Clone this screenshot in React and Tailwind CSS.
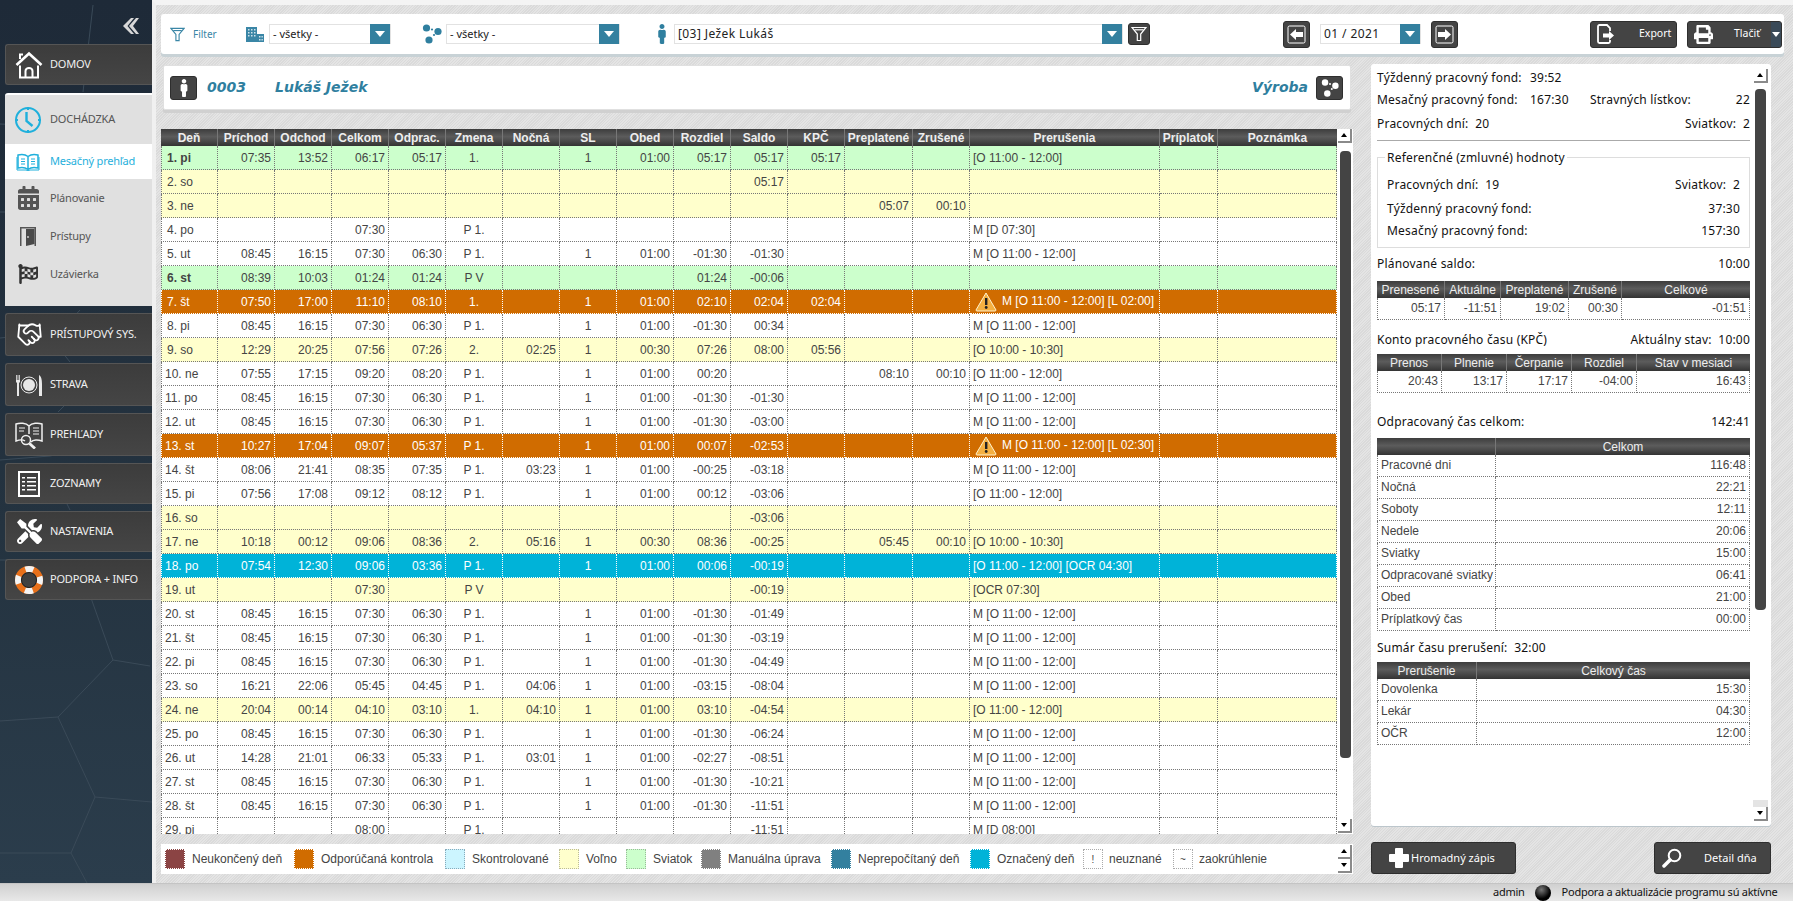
import { Handshake } from "lucide-react";
import { FaCalendarAlt, FaFlagCheckered, FaMale, FaPrint, FaTools } from "react-icons/fa";

const tahoma = "[font-family:DejaVu_Sans,sans-serif]";
const noto = "[font-family:Noto_Sans,sans-serif]";
const arial = "[font-family:Liberation_Sans,Arial,sans-serif]";
const hatch = "bg-[repeating-linear-gradient(135deg,#e4e4e4_0,#e4e4e4_1px,#dadada_1px,#dadada_2px)]";
const headBg = "bg-[linear-gradient(#3d3d3d,#5c5c5c_45%,#4a4a4a_70%,#333)]";

const O = "[O 11:00 - 12:00]";
const MO = "M [O 11:00 - 12:00]";
const std = (d, saldo) => ({ d, v: ["08:45", "16:15", "07:30", "06:30", "P 1.", "", "1", "01:00", "-01:30", saldo, "", "", ""], n: MO });

const rows = [
  { d: "1. pi", t: "g", b: true, v: ["07:35", "13:52", "06:17", "05:17", "1.", "", "1", "01:00", "05:17", "05:17", "05:17", "", ""], n: O },
  { d: "2. so", t: "y", v: ["", "", "", "", "", "", "", "", "", "05:17", "", "", ""], n: "" },
  { d: "3. ne", t: "y", v: ["", "", "", "", "", "", "", "", "", "", "", "05:07", "00:10"], n: "" },
  { d: "4. po", v: ["", "", "07:30", "", "P 1.", "", "", "", "", "", "", "", ""], n: "M [D 07:30]" },
  std("5. ut", "-01:30"),
  { d: "6. st", t: "g", b: true, v: ["08:39", "10:03", "01:24", "01:24", "P V", "", "", "", "01:24", "-00:06", "", "", ""], n: "" },
  { d: "7. št", t: "o", w: true, v: ["07:50", "17:00", "11:10", "08:10", "1.", "", "1", "01:00", "02:10", "02:04", "02:04", "", ""], n: "M [O 11:00 - 12:00] [L 02:00]" },
  std("8. pi", "00:34"),
  { d: "9. so", t: "y", v: ["12:29", "20:25", "07:56", "07:26", "2.", "02:25", "1", "00:30", "07:26", "08:00", "05:56", "", ""], n: "[O 10:00 - 10:30]" },
  { d: "10. ne", v: ["07:55", "17:15", "09:20", "08:20", "P 1.", "", "1", "01:00", "00:20", "", "", "08:10", "00:10"], n: O },
  std("11. po", "-01:30"),
  std("12. ut", "-03:00"),
  { d: "13. st", t: "o", w: true, v: ["10:27", "17:04", "09:07", "05:37", "P 1.", "", "1", "01:00", "00:07", "-02:53", "", "", ""], n: "M [O 11:00 - 12:00] [L 02:30]" },
  { d: "14. št", v: ["08:06", "21:41", "08:35", "07:35", "P 1.", "03:23", "1", "01:00", "-00:25", "-03:18", "", "", ""], n: MO },
  { d: "15. pi", v: ["07:56", "17:08", "09:12", "08:12", "P 1.", "", "1", "01:00", "00:12", "-03:06", "", "", ""], n: O },
  { d: "16. so", t: "y", v: ["", "", "", "", "", "", "", "", "", "-03:06", "", "", ""], n: "" },
  { d: "17. ne", t: "y", v: ["10:18", "00:12", "09:06", "08:36", "2.", "05:16", "1", "00:30", "08:36", "-00:25", "", "05:45", "00:10"], n: "[O 10:00 - 10:30]" },
  { d: "18. po", t: "c", v: ["07:54", "12:30", "09:06", "03:36", "P 1.", "", "1", "01:00", "00:06", "-00:19", "", "", ""], n: "[O 11:00 - 12:00] [OCR 04:30]" },
  { d: "19. ut", t: "y", v: ["", "", "07:30", "", "P V", "", "", "", "", "-00:19", "", "", ""], n: "[OCR 07:30]" },
  std("20. st", "-01:49"),
  std("21. št", "-03:19"),
  std("22. pi", "-04:49"),
  { d: "23. so", v: ["16:21", "22:06", "05:45", "04:45", "P 1.", "04:06", "1", "01:00", "-03:15", "-08:04", "", "", ""], n: MO },
  { d: "24. ne", t: "y", v: ["20:04", "00:14", "04:10", "03:10", "1.", "04:10", "1", "01:00", "03:10", "-04:54", "", "", ""], n: O },
  std("25. po", "-06:24"),
  { d: "26. ut", v: ["14:28", "21:01", "06:33", "05:33", "P 1.", "03:01", "1", "01:00", "-02:27", "-08:51", "", "", ""], n: MO },
  std("27. st", "-10:21"),
  std("28. št", "-11:51"),
  { d: "29. pi", v: ["", "", "08:00", "", "P 1.", "", "", "", "", "-11:51", "", "", ""], n: "M [D 08:00]" },
];

const rowTone = {
  g: "bg-[#ccffcc] text-[#444] [&>td]:border-[#777]",
  y: "bg-[#ffffcc] text-[#444] [&>td]:border-[#777]",
  o: "bg-[#d06c00] text-white [&>td]:border-[#fff]",
  c: "bg-[#00b3d8] text-white [&>td]:border-[#fff]",
};

const cols = [
  ["Deň", "w-[57px]"], ["Príchod", "w-[57px]"], ["Odchod", "w-[57px]"], ["Celkom", "w-[57px]"], ["Odprac.", "w-[57px]"], ["Zmena", "w-[57px]"],
  ["Nočná", "w-[57px]"], ["SL", "w-[57px]"], ["Obed", "w-[57px]"], ["Rozdiel", "w-[57px]"], ["Saldo", "w-[57px]"], ["KPČ", "w-[57px]"],
  ["Preplatené", "w-[68px]"], ["Zrušené", "w-[57px]"], ["Prerušenia", "w-[190px]"], ["Príplatok", "w-[58px]"], ["Poznámka", "w-[119px]"],
];

function Warn() {
  return (
    <svg viewBox="0 0 22 20" className="mr-[5px] ml-[2px] inline-block h-[20px] w-[22px] align-middle">
      <path d="M11 1 L21 18 Q21 19 20 19 L2 19 Q1 19 1 18 Z" fill="#f5b041" stroke="#fff3d0" strokeWidth="1" />
      <rect x="10" y="6" width="2.4" height="7" fill="#222" />
      <circle cx="11.2" cy="15.5" r="1.4" fill="#222" />
    </svg>
  );
}

function Funnel({ className, stroke = "currentColor" }) {
  return (
    <svg viewBox="0 0 16 16" fill="none" stroke={stroke} strokeWidth="1.2" className={className}>
      <path d="M1 1.5h14L9.7 8v6.5H6.3V8z" />
      <path d="M3.5 3.8h9" />
    </svg>
  );
}

function Nodes({ className, fill = "#2f7f9f" }) {
  return (
    <svg viewBox="0 0 20 20" fill={fill} className={className}>
      <circle cx="4.5" cy="4" r="3.6" />
      <circle cx="16" cy="7.5" r="3.6" />
      <circle cx="7" cy="16" r="3.6" />
      <circle cx="10" cy="5.5" r="1.1" />
      <circle cx="12" cy="11" r="1.1" />
    </svg>
  );
}

function Arrow({ right }) {
  return (
    <svg viewBox="0 0 19 19" className="h-[19px] w-[19px]">
      <rect x="1" y="1" width="17" height="17" rx="1.5" fill="none" stroke="#fff" strokeWidth="1" />
      <path d={right ? "M3 7h7V4l6 5.5-6 5.5v-3H3z" : "M16 7H9V4L3 9.5 9 15v-3h7z"} fill="#fff" />
    </svg>
  );
}

function DarkBtn({ className, children }) {
  return <div className={`flex shrink-0 items-center justify-center rounded-[3px] border border-[#2e2e2e] bg-[#444] text-white ${className}`}>{children}</div>;
}

function SelectArrow({ className = "" }) {
  return (
    <div className={`flex h-[20px] w-[20px] shrink-0 items-center justify-center bg-[#33809f] ${className}`}>
      <div className="h-0 w-0 border-x-[5px] border-t-[6px] border-x-transparent border-t-white" />
    </div>
  );
}

function Select({ className, text, big }) {
  return (
    <div className={`flex h-[20px] shrink-0 items-center border border-[#e2e2e2] bg-white ${className}`}>
      <span className={`flex-1 pl-[3px] text-[#222] ${noto} ${big ? "text-[12px] tracking-[0.4px]" : "text-[11px]"}`}>{text}</span>
      <SelectArrow />
    </div>
  );
}

function ScrollBtn({ up }) {
  return (
    <div className="flex h-[14px] w-[14px] shrink-0 items-center justify-center border-r-2 border-b-2 border-[#8a8a8a] bg-white">
      <div className={`h-0 w-0 border-x-[3.5px] border-x-transparent ${up ? "border-b-[4px] border-b-black" : "border-t-[4px] border-t-black"}`} />
    </div>
  );
}

function HomeIcon() {
  return (
    <svg viewBox="0 0 28 28" fill="none" stroke="#fff" className="h-[28px] w-[28px]">
      <path d="M1.5 14 14 2.5 26.5 14" strokeWidth="2.6" />
      <path d="M5 14.5V26.5h18V14.5" strokeWidth="2" />
      <path d="M10.5 26.5V20a3.5 3 0 0 1 7 0v6.5" strokeWidth="2" />
      <path d="M5 8V3.5h3" strokeWidth="2" />
    </svg>
  );
}

function ClockIcon() {
  return (
    <svg viewBox="0 0 28 28" fill="none" stroke="#1fb0dc" strokeWidth="2" className="h-[28px] w-[28px]">
      <circle cx="14" cy="14" r="12" />
      <path d="M12.5 6v9l6 5" strokeWidth="2.4" />
      <path d="M14 1v3M14 24v3M1 14h3M24 14h3" />
    </svg>
  );
}

function BookIcon() {
  return (
    <svg viewBox="0 0 24 18" fill="none" stroke="#1fb0dc" strokeWidth="1.5" className="h-[18px] w-[24px]">
      <path d="M12 3.5C9.5 1.5 5 1.3 2 2v13c3-.7 7.5-.5 10 1.5 2.500-2 7-2.200 10-1.500V2c-3-.7-7.500-.5-10 1.500zM12 3.500v13" />
      <path d="M1 4v13h9l2 .8 2-.8h9V4" strokeWidth="1" />
      <path d="M5 6h4M5 8.500h4M5 11h4M15 6h4M15 8.500h4M15 11h4" strokeWidth="1" />
    </svg>
  );
}

function DoorIcon() {
  return (
    <svg viewBox="0 0 18 20" className="h-[20px] w-[18px]">
      <path d="M1 20V1h16v19h-1.500V2.500H2.500V20z" fill="#555" />
      <path d="M7 3h8.500v15L7 20z" fill="#4a4a4a" />
      <circle cx="9" cy="11" r="0.9" fill="#ddd" />
    </svg>
  );
}

function PlateIcon() {
  return (
    <svg viewBox="0 0 28 22" className="h-[22px] w-[28px]" fill="#e8e8e8">
      <circle cx="14" cy="11" r="8" fill="none" stroke="#e8e8e8" strokeWidth="1" />
      <circle cx="14" cy="11" r="6" />
      <path d="M1 1h.8v5h.8V1h.8v5h.8V1H5v7L4 9v13H2V9L1 8z" />
      <path d="M24 1c2 1 3 4 3 10v11h-3z" />
    </svg>
  );
}

function BookSearchIcon() {
  return (
    <svg viewBox="0 0 30 28" fill="none" stroke="#f0f0f0" strokeWidth="1.500" className="h-[28px] w-[30px]">
      <path d="M15 5C12 2 6 1.500 2 3v17c4-1.500 7-1.500 9 0M15 5c3-3 9-3.500 13-2v17c-4-1.500-9-1.500-11 1M15 5v8" />
      <path d="M5 7h6M5 10h5M19 7h6M19 10h6M19 13h6" strokeWidth="1" />
      <circle cx="12" cy="19" r="4.500" />
      <path d="M15.500 22.500 21 27.500" strokeWidth="2.800" />
    </svg>
  );
}

function ListIcon() {
  return (
    <svg viewBox="0 0 22 26" className="h-[26px] w-[22px]">
      <rect x="1" y="1" width="20" height="24" fill="none" stroke="#fff" strokeWidth="2" />
      <path d="M4 6h3v1.500H4zM9 6h9v1.500H9zM4 10h3v1.500H4zM9 10h9v1.500H9zM4 14h3v1.500H4zM9 14h9v1.500H9zM4 18h3v1.500H4zM9 18h9v1.500H9z" fill="#fff" />
    </svg>
  );
}

function BuoyIcon() {
  return (
    <svg viewBox="0 0 30 30" className="h-[30px] w-[30px]">
      <circle cx="15" cy="15" r="11" fill="none" stroke="#e8701a" strokeWidth="6" />
      <circle cx="15" cy="15" r="11" fill="none" stroke="#f4f4f4" strokeWidth="6" strokeDasharray="8 9.300" strokeDashoffset="4" />
      <circle cx="15" cy="15" r="7.500" fill="none" stroke="#222" strokeWidth="1" />
    </svg>
  );
}

function BuildingIcon() {
  return (
    <svg viewBox="0 0 18 15" fill="#3a86a6" className="h-[15px] w-[18px]">
      <path d="M0 0h11v15H0zM11 7h7v8h-7z" />
      <path d="M2 2h1.500v1.500H2zM5 2h1.500v1.500H5zM8 2h1.500v1.500H8zM2 5h1.500v1.500H2zM5 5h1.500v1.500H5zM8 5h1.500v1.500H8zM2 8h1.500v1.500H2zM5 8h1.500v1.500H5zM8 8h1.500v1.500H8zM13 9h1.500v1.500H13zM15.500 9h1.300v1.500h-1.300zM13 12h1.500v1.500H13zM15.500 12h1.300v1.500h-1.300z" fill="#cfe3ec" />
    </svg>
  );
}

function ExportIcon() {
  return (
    <svg viewBox="0 0 18 20" fill="none" stroke="#fff" strokeWidth="1.800" className="h-[20px] w-[18px]">
      <path d="M13 7V4L10 1H2.500A1.500 1.500 0 0 0 1 2.500v15A1.500 1.500 0 0 0 2.500 19H11.500A1.500 1.500 0 0 0 13 17.500V16" />
      <path d="M6 9.500h6V7l5 4.500-5 4.500v-2.500H6z" fill="#fff" stroke="none" />
    </svg>
  );
}

function SearchIcon() {
  return (
    <svg viewBox="0 0 20 20" fill="none" stroke="#fff" className="h-[20px] w-[20px]">
      <circle cx="12.500" cy="7.500" r="5.800" strokeWidth="2" />
      <path d="M8 12 2 18" strokeWidth="3.500" strokeLinecap="round" />
    </svg>
  );
}

function SideBtn({ icon, label, className }) {
  return (
    <div className={`flex items-center rounded-l-[3px] border border-r-0 border-[#555] bg-[linear-gradient(#3c3c3c,#454545)] text-[#f0f0f0] ${className}`}>
      <div className="flex w-[44px] shrink-0 items-center justify-center pl-[2px]">{icon}</div>
      <span className={`text-[11px] tracking-[-0.2px] ${noto}`}>{label}</span>
    </div>
  );
}

function SubItem({ icon, label, active, h = "h-[38px]" }) {
  return (
    <div className={`flex items-center ${h} ${active ? "bg-white text-[#1fb0dc]" : "text-[#555]"}`}>
      <div className="flex w-[45px] shrink-0 items-center justify-center pl-[1px]">{icon}</div>
      <span className={`text-[11px] tracking-[-0.2px] ${noto}`}>{label}</span>
    </div>
  );
}

function Sidebar() {
  return (
    <div className="relative flex w-[152px] shrink-0 flex-col bg-[linear-gradient(#1e2a38,#243340_60%,#2b3d4c)] pt-[44px] pl-[5px]">
      <svg viewBox="0 0 152 883" className="absolute inset-0 h-[883px] w-[152px]" fill="none" stroke="#3a4a58" strokeWidth="1">
        <path d="M93 5 83 92M0 124l50 2M0 212h20M0 338l60-6 20-22M62 352l8 10M70 400l-12 12M0 460l50-4 10-2M66 502l4 8M0 560l40 0M85 551l25-10" />
        <path d="M91 598 113 660 150 666M113 660 58 717 0 721M58 717 95 797 152 802M95 797 71 853 0 853M71 853 87 883" />
      </svg>
      <div className="absolute top-[18px] left-[123px] text-[#ccc]">
        <svg viewBox="0 0 16 16" className="h-[16px] w-[16px]" fill="#d8d8d8">
          <path d="M8 0 0 8l8 8h3L4.500 8 11 0zM13 0 6 8l7 8h3L10 8l6-8z" />
        </svg>
      </div>
      <SideBtn className="relative h-[41px]" label="DOMOV" icon={<HomeIcon />} />
      <div className="relative mt-[8px] h-[213px] rounded-tl-[3px] border-t-2 border-white bg-[#e0e0e0]">
        <SubItem h="h-[49px]" icon={<ClockIcon />} label="DOCHÁDZKA" />
        <SubItem h="h-[35px]" active icon={<BookIcon />} label="Mesačný prehľad" />
        <SubItem icon={<FaCalendarAlt className="h-[24px] w-[23px] text-[#555]" />} label="Plánovanie" />
        <SubItem icon={<DoorIcon />} label="Prístupy" />
        <SubItem icon={<FaFlagCheckered className="h-[20px] w-[20px] text-[#333]" />} label="Uzávierka" />
      </div>
      <SideBtn className="relative mt-[7px] h-[43px]" label="PRÍSTUPOVÝ SYS." icon={<Handshake className="h-[27px] w-[29px] text-white" strokeWidth={1.6} />} />
      <SideBtn className="relative mt-[7px] h-[43px]" label="STRAVA" icon={<PlateIcon />} />
      <SideBtn className="relative mt-[7px] h-[43px]" label="PREHĽADY" icon={<BookSearchIcon />} />
      <SideBtn className="relative mt-[7px] h-[41px]" label="ZOZNAMY" icon={<ListIcon />} />
      <SideBtn className="relative mt-[7px] h-[41px]" label="NASTAVENIA" icon={<FaTools className="h-[25px] w-[25px] text-white" />} />
      <SideBtn className="relative mt-[7px] h-[41px]" label="PODPORA + INFO" icon={<BuoyIcon />} />
    </div>
  );
}

function Toolbar() {
  return (
    <div className="flex h-[40px] w-[1623px] shrink-0 items-center rounded-[3px] bg-white pl-[9px] shadow-[0_3px_0_#c8d2d6]">
      <Funnel className="h-[15px] w-[15px] shrink-0 text-[#3a86a6]" />
      <span className={`ml-[8px] w-[24px] shrink-0 text-[10px] text-[#3a86a6] ${noto}`}>Filter</span>
      <div className="ml-[29px] shrink-0"><BuildingIcon /></div>
      <Select className="ml-[5px] w-[122px]" text="- všetky -" />
      <Nodes className="ml-[31px] h-[20px] w-[20px] shrink-0" />
      <Select className="ml-[4px] w-[174px]" text="- všetky -" />
      <FaMale className="ml-[36px] h-[20px] w-[12px] shrink-0 text-[#2f7f9f]" />
      <Select big className="ml-[6px] w-[449px]" text="[03] Ježek Lukáš" />
      <DarkBtn className="ml-[5px] h-[22px] w-[22px]"><Funnel className="h-[16px] w-[16px]" stroke="#fff" /></DarkBtn>
      <DarkBtn className="ml-[133px] h-[27px] w-[27px]"><Arrow /></DarkBtn>
      <Select big className="ml-[10px] w-[101px]" text="01 / 2021" />
      <DarkBtn className="ml-[10px] h-[27px] w-[27px]"><Arrow right /></DarkBtn>
      <DarkBtn className="ml-[132px] h-[27px] w-[87px] justify-start pl-[6px]">
        <ExportIcon />
        <span className={`ml-[24px] text-[10.5px] ${noto}`}>Export</span>
      </DarkBtn>
      <DarkBtn className="ml-[10px] h-[27px] w-[95px] justify-start overflow-hidden pl-[6px]">
        <FaPrint className="h-[19px] w-[19px] shrink-0" />
        <span className={`ml-[21px] w-[29px] text-[10.5px] ${noto}`}>Tlačiť</span>
        <div className="ml-[8px] flex h-full flex-1 items-center justify-center bg-[#3a4a58]">
          <div className="h-0 w-0 border-x-[4px] border-t-[5px] border-x-transparent border-t-white" />
        </div>
      </DarkBtn>
    </div>
  );
}

function EmployeeHeader() {
  return (
    <div className="ml-[2px] flex h-[45px] w-[1188px] items-center rounded-[2px] border border-[#e0e0e0] bg-white pr-[7px] pl-[6px] shadow-[0_3px_0_#d0d0d0]">
      <DarkBtn className="h-[24px] w-[27px]"><FaMale className="h-[18px] w-[12px]" /></DarkBtn>
      <span className={`ml-[10px] w-[68px] text-[14px] font-bold text-[#2f7f9f] italic ${tahoma}`}>0003</span>
      <span className={`text-[14px] font-bold text-[#2f7f9f] italic ${tahoma}`}>Lukáš Ježek</span>
      <span className={`ml-auto text-[14px] font-bold text-[#2f7f9f] italic ${tahoma}`}>Výroba</span>
      <DarkBtn className="ml-[8px] h-[24px] w-[27px]"><Nodes className="h-[18px] w-[18px]" fill="#fff" /></DarkBtn>
    </div>
  );
}

function Attendance() {
  return (
    <div className="mt-[19px] flex h-[705px] w-[1192px] shrink-0 overflow-hidden bg-white">
      <div className="w-[1176px] shrink-0">
        <table className={`w-[1176px] table-fixed border-separate border-spacing-0 text-[12px] leading-none ${arial}`}>
          <colgroup>
            {cols.map(([h, w]) => <col key={h} className={w} />)}
          </colgroup>
          <thead>
            <tr className={`h-[17px] ${headBg}`}>
              {cols.map(([h], i) => (
                <th key={h} className={`p-0 text-center font-bold text-[#eee] ${i < cols.length - 1 ? "border-r border-[#777]" : ""}`}>{h}</th>
              ))}
            </tr>
          </thead>
          <tbody>
            {rows.map((r) => (
              <tr key={r.d} className={`h-[24px] [&>td]:border-r [&>td]:border-b [&>td]:border-dotted ${r.t ? rowTone[r.t] : "bg-white text-[#444] [&>td]:border-[#777]"}`}>
                <td className={`border-l border-dotted text-left ${r.b ? "font-bold" : ""} ${r.d.length > 5 ? "pl-[3px]" : "pl-[5px]"}`}>{r.d}</td>
                {r.v.map((c, i) => {
                  const centered = i === 4 || i === 6;
                  return <td key={i} className={`p-0 ${centered ? "text-center" : "pr-[3px] text-right"}`}>{c}</td>;
                })}
                <td className="overflow-hidden pl-[3px] whitespace-nowrap">{r.w && <Warn />}{r.n}</td>
                <td />
                <td />
              </tr>
            ))}
          </tbody>
        </table>
      </div>
      <div className="flex w-[16px] flex-col items-center">
        <ScrollBtn up />
        <div className="mt-[8px] h-[607px] w-[11px] shrink-0 rounded-[4px] bg-[#444]" />
        <div className="mt-auto mb-[1px]"><ScrollBtn /></div>
      </div>
    </div>
  );
}

const legend = [
  ["Neukončený deň", "bg-[#8b4444] border-white", "w-[129px]"],
  ["Odporúčaná kontrola", "bg-[#d06c00] border-white", "w-[151px]"],
  ["Skontrolované", "bg-[#ccf5ff] border-[#8ab]", "w-[114px]"],
  ["Voľno", "bg-[#ffffcc] border-[#bb9]", "w-[67px]"],
  ["Sviatok", "bg-[#ccffcc] border-[#9b9]", "w-[75px]"],
  ["Manuálna úprava", "bg-[#808080] border-white", "w-[130px]"],
  ["Neprepočítaný deň", "bg-[#33809f] border-white", "w-[139px]"],
  ["Označený deň", "bg-[#00b3d8] border-white", "w-[113px]"],
];

function Legend() {
  return (
    <div className="mt-[10px] flex h-[30px] w-[1192px] shrink-0 items-center bg-white pl-[4px]">
      {legend.map(([t, c, w]) => (
        <div key={t} className={`flex items-center ${w}`}>
          <div className={`h-[20px] w-[20px] shrink-0 border border-dotted ${c}`} />
          <span className={`ml-[7px] text-[12px] whitespace-nowrap text-[#444] ${arial}`}>{t}</span>
        </div>
      ))}
      <div className="flex w-[90px] items-center">
        <div className={`flex h-[20px] w-[20px] shrink-0 items-center justify-center border border-dotted border-[#aaa] text-[10px] text-[#444] ${arial}`}>!</div>
        <span className={`ml-[6px] text-[12px] text-[#444] ${arial}`}>neuznané</span>
      </div>
      <div className="flex items-center">
        <div className={`flex h-[20px] w-[20px] shrink-0 items-center justify-center border border-dotted border-[#aaa] text-[10px] text-[#444] ${arial}`}>~</div>
        <span className={`ml-[6px] text-[12px] text-[#444] ${arial}`}>zaokrúhlenie</span>
      </div>
      <div className="ml-auto flex w-[16px] flex-col items-center">
        <ScrollBtn up />
        <ScrollBtn />
      </div>
    </div>
  );
}

function MiniTable({ widths, head, body }) {
  return (
    <table className={`w-[373px] table-fixed border-separate border-spacing-0 text-[12px] leading-none tracking-normal text-[#444] ${arial}`}>
      <colgroup>
        {widths.map((w, i) => <col key={i} className={w} />)}
      </colgroup>
      <thead>
        <tr className={`h-[17px] ${headBg}`}>
          {head.map((h, i) => (
            <th key={i} className={`p-0 text-center font-normal text-[#eee] ${i < head.length - 1 ? "border-r border-[#777]" : ""}`}>{h}</th>
          ))}
        </tr>
      </thead>
      <tbody>
        {body.map((r, ri) => (
          <tr key={ri} className="h-[22px]">
            {r.map((c, i) => (
              <td key={i} className={`border-r border-b border-dotted border-[#777] p-0 pb-[2px] whitespace-nowrap ${i === 0 ? "border-l" : ""} ${/^-?\d/.test(c) ? "pr-[3px] text-right" : "pl-[3px] text-left"}`}>{c}</td>
            ))}
          </tr>
        ))}
      </tbody>
    </table>
  );
}

function Line({ className = "", children }) {
  return <div className={`flex h-[22px] items-center justify-between whitespace-nowrap text-[#111] ${className}`}>{children}</div>;
}

function SummaryPanel() {
  return (
    <div className="flex h-[762px] w-[400px] rounded-[3px] bg-white shadow-[0_1px_0_#bcc6cc]">
      <div className={`ml-[6px] w-[373px] shrink-0 pt-[3px] text-[12px] tracking-[0.2px] ${noto}`}>
        <Line className="justify-start"><span className="w-[153px]">Týždenný pracovný fond:</span><span>39:52</span></Line>
        <Line>
          <span className="w-[153px]">Mesačný pracovný fond:</span>
          <span className="w-[60px]">167:30</span>
          <span>Stravných lístkov:</span>
          <span className="ml-auto">22</span>
        </Line>
        <Line className="mt-[2px]"><span>Pracovných dní:&nbsp; 20</span><span>Sviatkov:&nbsp; 2</span></Line>
        <div className="mt-[5px] h-px bg-[#aaa]" />
        <div className="relative mt-[16px] h-[91px] border border-[#ddd] px-[9px] pt-[16px]">
          <span className="absolute -top-[9px] left-[7px] bg-white px-[2px] text-[#111]">Referenčné (zmluvné) hodnoty</span>
          <Line><span>Pracovných dní:&nbsp; 19</span><span>Sviatkov:&nbsp; 2</span></Line>
          <Line className="mt-[2px]"><span>Týždenný pracovný fond:</span><span>37:30</span></Line>
          <Line><span>Mesačný pracovný fond:</span><span>157:30</span></Line>
        </div>
        <Line className="mt-[5px]"><span>Plánované saldo:</span><span>10:00</span></Line>
        <div className="mt-[6px]">
          <MiniTable
            widths={["w-[68px]", "w-[56px]", "w-[68px]", "w-[53px]", "w-[128px]"]}
            head={["Prenesené", "Aktuálne", "Preplatené", "Zrušené", "Celkové"]}
            body={[["05:17", "-11:51", "19:02", "00:30", "-01:51"]]}
          />
        </div>
        <Line className="mt-[9px]"><span>Konto pracovného času (KPČ)</span><span>Aktuálny stav:&nbsp; 10:00</span></Line>
        <div className="mt-[3px]">
          <MiniTable
            widths={["w-[65px]", "w-[65px]", "w-[65px]", "w-[65px]", "w-[113px]"]}
            head={["Prenos", "Plnenie", "Čerpanie", "Rozdiel", "Stav v mesiaci"]}
            body={[["20:43", "13:17", "17:17", "-04:00", "16:43"]]}
          />
        </div>
        <Line className="mt-[18px]"><span>Odpracovaný čas celkom:</span><span>142:41</span></Line>
        <div className="mt-[5px]">
          <MiniTable
            widths={["w-[119px]", "w-[254px]"]}
            head={["", "Celkom"]}
            body={[
              ["Pracovné dni", "116:48"], ["Nočná", "22:21"], ["Soboty", "12:11"], ["Nedele", "20:06"],
              ["Sviatky", "15:00"], ["Odpracované sviatky", "06:41"], ["Obed", "21:00"], ["Príplatkový čas", "00:00"],
            ]}
          />
        </div>
        <Line className="mt-[6px] justify-start"><span>Sumár času prerušení:&nbsp; 32:00</span></Line>
        <div className="mt-[3px]">
          <MiniTable
            widths={["w-[100px]", "w-[273px]"]}
            head={["Prerušenie", "Celkový čas"]}
            body={[["Dovolenka", "15:30"], ["Lekár", "04:30"], ["OČR", "12:00"]]}
          />
        </div>
      </div>
      <div className="ml-[3px] flex w-[15px] flex-col items-center pt-[5px] pb-[5px]">
        <ScrollBtn up />
        <div className="mt-[6px] h-[521px] w-[11px] rounded-[4px] bg-[#444]" />
        <div className="mt-auto h-[7px] w-[15px] bg-[#e4e4e4]" />
        <ScrollBtn />
      </div>
    </div>
  );
}

export default function App() {
  return (
    <div className={`flex h-[901px] w-[1793px] flex-col overflow-hidden ${hatch}`}>
      <div className="flex h-[883px] shrink-0">
        <Sidebar />
        <div className="flex-1 border-t-[5px] border-l-[4px] border-t-[#f4f4f4] border-l-[#f0f0f0] pt-[9px] pl-[5px]">
          <Toolbar />
          <div className="flex">
            <div className="flex w-[1192px] shrink-0 flex-col pt-[11px]">
              <EmployeeHeader />
              <Attendance />
              <Legend />
            </div>
            <div className="ml-[18px] w-[400px] pt-[10px]">
              <SummaryPanel />
              <div className={`mt-[16px] flex justify-between text-[11px] ${noto}`}>
                <DarkBtn className="h-[32px] w-[145px] justify-start pl-[17px]">
                  <svg viewBox="0 0 20 20" fill="#fff" className="h-[20px] w-[20px]">
                    <path d="M6 1a1 1 0 0 1 1-1h6a1 1 0 0 1 1 1v5h5a1 1 0 0 1 1 1v6a1 1 0 0 1-1 1h-5v5a1 1 0 0 1-1 1H7a1 1 0 0 1-1-1v-5H1a1 1 0 0 1-1-1V7a1 1 0 0 1 1-1h5z" />
                  </svg>
                  <span className="ml-[2px]">Hromadný zápis</span>
                </DarkBtn>
                <DarkBtn className="h-[32px] w-[117px] justify-start pl-[7px]">
                  <SearchIcon />
                  <span className="ml-[22px]">Detail dňa</span>
                </DarkBtn>
              </div>
            </div>
          </div>
        </div>
      </div>
      <div className={`flex h-[18px] items-center border-t border-[#c4c4c4] bg-[linear-gradient(#d0d0d0,#e8e8e8)] pl-[1493px] text-[11px] tracking-[-0.25px] whitespace-nowrap text-[#111] ${noto}`}>
        <span>admin</span>
        <div className="ml-[10px] h-[16px] w-[16px] shrink-0 rounded-full bg-[radial-gradient(circle_at_40%_30%,#777,#000_60%)]" />
        <span className="ml-[11px]">Podpora a aktualizácie programu sú aktívne</span>
      </div>
    </div>
  );
}
